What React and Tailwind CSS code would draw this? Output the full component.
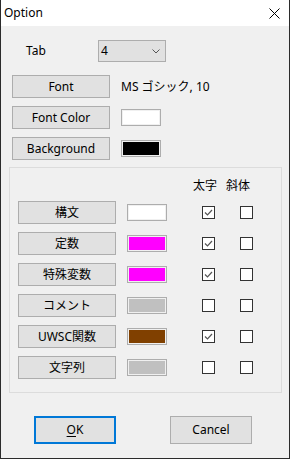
import React from "react";

const font = { fontFamily: '"Noto Sans", "Noto Sans CJK JP", sans-serif' };

function Btn({ children, className = "" }) {
  return (
    <div
      className={`flex items-center justify-center bg-[#e1e1e1] border border-[#adadad] text-[12px] text-black ${className}`}
    >
      {children}
    </div>
  );
}

function Swatch({ color }) {
  return (
    <div className="w-[40px] h-[17px] border border-[#adadad] bg-[#f0f0f0] p-px">
      <div className="w-full h-full" style={{ background: color }} />
    </div>
  );
}

function Check({ checked }) {
  return (
    <div className="w-[13px] h-[13px] border border-[#333333] bg-white flex items-center justify-center">
      {checked && (
        <svg width="11" height="11" viewBox="0 0 11 11">
          <path d="M2 5.5 L4.5 8 L9 3" fill="none" stroke="#555" strokeWidth="1.2" />
        </svg>
      )}
    </div>
  );
}

const rows = [
  { label: "構文", color: "#ffffff", bold: true },
  { label: "定数", color: "#ff00ff", bold: true },
  { label: "特殊変数", color: "#ff00ff", bold: true },
  { label: "コメント", color: "#c0c0c0", bold: false },
  { label: "UWSC関数", color: "#804000", bold: true },
  { label: "文字列", color: "#c0c0c0", bold: false },
];

export default function App() {
  return (
    <div
      className="w-[290px] h-[459px] bg-[#f0f0f0] border-l border-r border-b border-[#2b2b2b] flex flex-col text-[12px] text-black"
      style={font}
    >
      <div className="h-[26px] bg-white flex items-center justify-between pl-[3px] pr-[9px]">
        <span className="text-[12px] leading-none">Option</span>
        <svg width="11" height="11" viewBox="0 0 11 11">
          <path d="M0.5 0.5 L10.5 10.5 M10.5 0.5 L0.5 10.5" stroke="#000" strokeWidth="1" />
        </svg>
      </div>

      <div className="flex flex-col pt-[14px] pl-[11px]">
        <div className="flex items-center h-[22px]">
          <span className="ml-[14px] w-[72px]">Tab</span>
          <div className="w-[68px] h-[22px] bg-[#e1e1e1] border border-[#adadad] flex items-center justify-between pl-[2px] pr-[5px]">
            <span>4</span>
            <svg width="8" height="5" viewBox="0 0 8 5">
              <path d="M0.5 0.5 L4 4 L7.5 0.5" fill="none" stroke="#555" strokeWidth="1" />
            </svg>
          </div>
        </div>

        <div className="flex items-center mt-[13px]">
          <Btn className="w-[98px] h-[23px]">Font</Btn>
          <span className="ml-[11px]">MS ゴシック, 10</span>
        </div>
        <div className="flex items-center mt-[8px]">
          <Btn className="w-[98px] h-[23px]">Font Color</Btn>
          <div className="ml-[11px]">
            <Swatch color="#ffffff" />
          </div>
        </div>
        <div className="flex items-center mt-[8px]">
          <Btn className="w-[98px] h-[23px]">Background</Btn>
          <div className="ml-[11px]">
            <Swatch color="#000000" />
          </div>
        </div>
      </div>

      <div className="ml-[8px] mt-[7px] w-[273px] h-[226px] border border-[#dcdcdc] flex flex-col pt-[10px] pl-[8px]">
        <div className="flex h-[16px] items-center leading-none">
          <span className="ml-[175px]">太字</span>
          <span className="ml-[9px]">斜体</span>
        </div>
        <div className="flex flex-col gap-[8px] mt-[7px]">
          {rows.map((r) => (
            <div key={r.label} className="flex items-center h-[23px]">
              <Btn className="w-[98px] h-[23px]">{r.label}</Btn>
              <div className="ml-[11px]">
                <Swatch color={r.color} />
              </div>
              <div className="ml-[35px]">
                <Check checked={r.bold} />
              </div>
              <div className="ml-[25px]">
                <Check checked={false} />
              </div>
            </div>
          ))}
        </div>
      </div>

      <div className="flex mt-[23px] pl-[33px]">
        <div className="w-[82px] h-[28px] bg-[#e1e1e1] border-2 border-[#0078d7] flex items-center justify-center">
          <span>
            <span className="underline underline-offset-2">O</span>K
          </span>
        </div>
        <div className="ml-[54px] w-[82px] h-[28px] bg-[#e1e1e1] border border-[#adadad] flex items-center justify-center">
          Cancel
        </div>
      </div>
    </div>
  );
}
